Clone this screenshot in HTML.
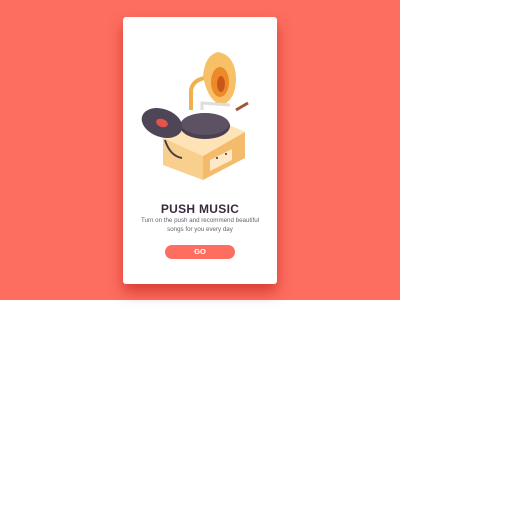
<!DOCTYPE html>
<html><head><style>
body{margin:0;width:512px;height:512px;background:#fff;position:relative;overflow:hidden;font-family:"Liberation Sans",sans-serif}
.bg{position:absolute;left:0;top:0;width:400px;height:300px;background:#fd6e60}
.card{position:absolute;left:123px;top:17px;width:154px;height:267px;background:#fff;border-radius:3px;box-shadow:0 8px 14px rgba(190,30,20,.6)}
h1{position:absolute;left:0;width:154px;top:185px;margin:0;text-align:center;font-size:12px;font-weight:bold;color:#3a2a3e;letter-spacing:.3px}
p{position:absolute;left:0;width:154px;top:199px;margin:0;text-align:center;font-size:6.2px;line-height:9px;color:#6a6070}
.btn{position:absolute;left:42px;top:228px;width:70px;height:14px;border-radius:7px;background:#fd6e60;color:#fff;font-size:7.5px;font-weight:bold;text-align:center;line-height:14px}
</style></head><body>
<div class="bg"></div>
<div class="card">
<svg style="position:absolute;left:0;top:0" width="154" height="180" viewBox="123 17 154 180">
<path d="M191 110 L191 90 Q193 80 205 78" stroke="#f0b04a" stroke-width="4" fill="none"/>
<path d="M203 76 Q205 55 218 52 Q235 55 236 78 Q236 100 222 105 Q208 102 203 76Z" fill="#f7c066"/>
<ellipse cx="220" cy="82" rx="9" ry="15" fill="#ec8a2a"/>
<ellipse cx="221" cy="84" rx="4" ry="8" fill="#c9571a"/>
<path d="M202 110 L202 103 L230 105" stroke="#ddd" stroke-width="3" fill="none"/>
<path d="M236 110 L248 103" stroke="#a0553a" stroke-width="3"/>
<path d="M163 138 L205 114 L245 132 L203 156Z" fill="#fde3b5"/>
<path d="M163 138 L163 165 L203 180 L203 156Z" fill="#f9cf8d"/>
<path d="M203 156 L245 132 L245 158 L203 180Z" fill="#f5bb6d"/>
<path d="M210 160 L232 149 L232 160 L210 171Z" fill="#fde9c8"/>
<circle cx="217" cy="158" r="1" fill="#333"/><circle cx="226" cy="154" r="1" fill="#333"/>
<ellipse cx="205" cy="126" rx="25" ry="13" fill="#4a4050"/>
<ellipse cx="205" cy="124" rx="24" ry="11" fill="#5c5263"/>
<path d="M165 140 Q170 156 182 158" stroke="#4a3a4a" stroke-width="2" fill="none"/>
<ellipse cx="162" cy="123" rx="21" ry="14" transform="rotate(20 162 123)" fill="#4e4556"/>
<ellipse cx="162" cy="123" rx="6" ry="4" transform="rotate(20 162 123)" fill="#e8524a"/>
</svg>
<h1>PUSH MUSIC</h1>
<p>Turn on the push and recommend beautiful<br>songs for you every day</p>
<div class="btn">GO</div>
</div>
</body></html>
